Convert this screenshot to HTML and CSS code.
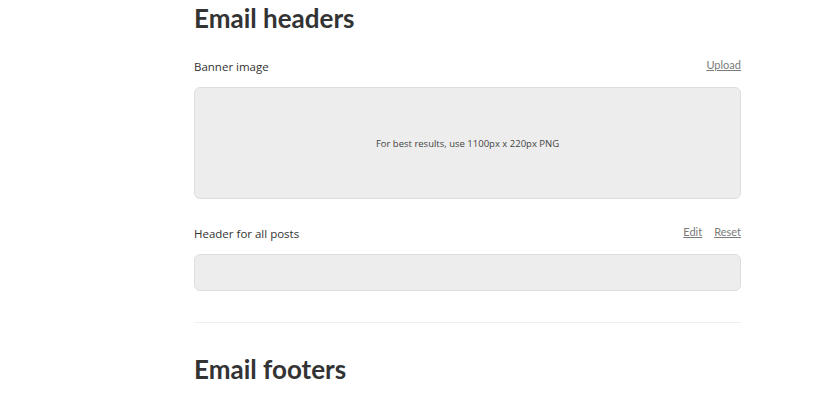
FILE: index.html
```html
<!DOCTYPE html>
<html>
<head>
<meta charset="utf-8">
<link rel="stylesheet" href="styles.css">
</head>
<body>
<main class="page">
  <section class="section">
    <h1 class="title">Email headers</h1>
    <div class="row">
      <span class="label">Banner image</span>
      <span class="actions"><a class="link" href="#">Upload</a></span>
    </div>
    <div class="box box-banner">For best results, use 1100px x 220px PNG</div>
    <div class="row row-next">
      <span class="label">Header for all posts</span>
      <span class="actions"><a class="link" href="#">Edit</a><a class="link" href="#">Reset</a></span>
    </div>
    <div class="box box-small"></div>
  </section>
  <hr class="divider">
  <section class="section">
    <h1 class="title">Email footers</h1>
    <div class="row row-last">
      <span class="label">Footer for all posts</span>
      <span class="actions"><a class="link" href="#">Edit</a><a class="link" href="#">Reset</a></span>
    </div>
  </section>
</main>
</body>
</html>
```

FILE: styles.css
```css
html, body {
  margin: 0;
  padding: 0;
  background: #ffffff;
}
body {
  font-family: "Open Sans", "Noto Sans", sans-serif;
  color: #333333;
}
.page {
  width: 547px;
  margin-left: 194px;
}
.title {
  margin: 0;
  font-family: "Lato", "Open Sans", sans-serif;
  font-size: 26px;
  line-height: 36px;
  font-weight: 700;
  color: #333333;
}
.row {
  display: flex;
  justify-content: space-between;
  align-items: center;
  height: 20px;
  margin-top: 20px;
}
.row-next {
  margin-top: 24px;
}
.row-last {
  margin-top: 23px;
}
.label {
  font-size: 11.5px;
  font-weight: 500;
  color: #333333;
}
.actions {
  display: flex;
  gap: 12px;
  margin-bottom: 3px;
}
.link {
  font-family: "Lato", sans-serif;
  font-size: 11px;
  color: #7a7a7a;
  text-decoration: underline;
}
.box {
  box-sizing: border-box;
  margin-top: 11px;
  background: #ededed;
  border: 1px solid #dedede;
  border-radius: 6px;
}
.box-banner {
  height: 112px;
  display: flex;
  align-items: center;
  justify-content: center;
  font-size: 9.5px;
  color: #444444;
}
.box-small {
  height: 37px;
}
.divider {
  margin: 31px 0 28px 0;
  border: 0;
  height: 1px;
  background: #efefef;
}
```
